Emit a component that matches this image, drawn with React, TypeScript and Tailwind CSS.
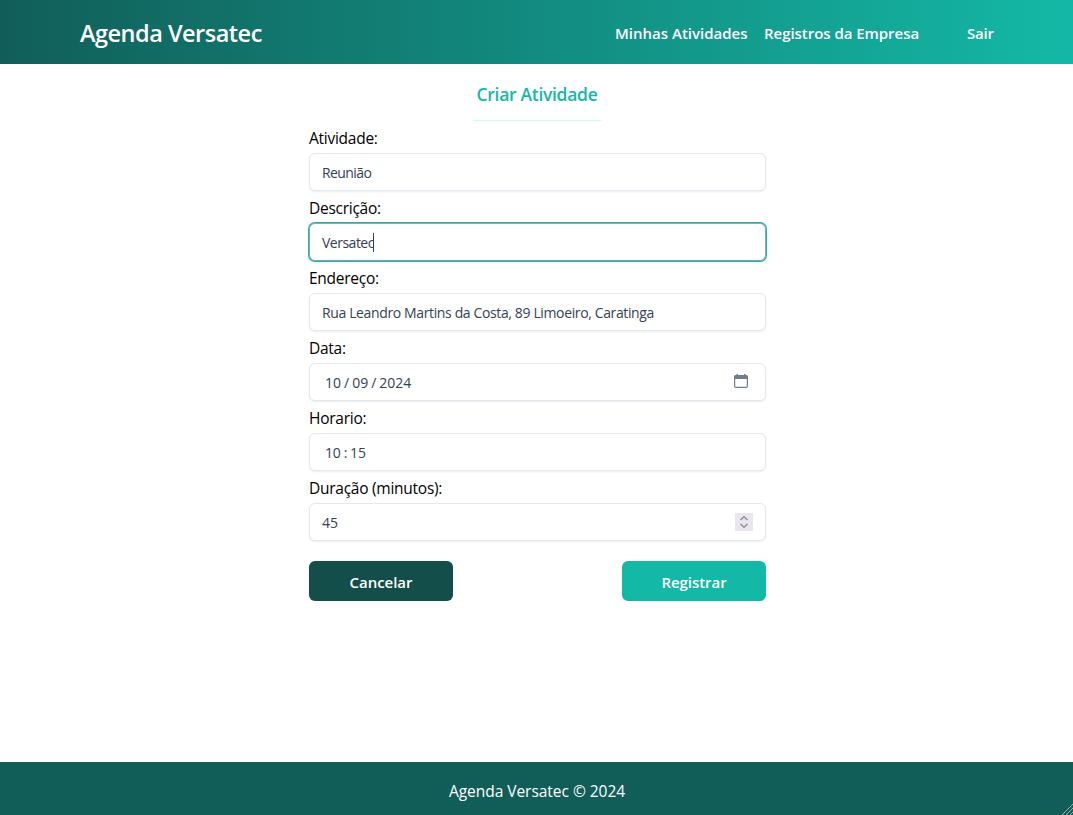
import type { ReactNode } from "react";

type FieldProps = {
  label: string;
  focused?: boolean;
  children: ReactNode;
};

function Field({ label, focused = false, children }: FieldProps) {
  return (
    <div className="h-[70px]">
      <div className="flex h-6 items-center pt-0.5 text-[15.5px] tracking-[-0.26px] text-black">
        <span>{label}</span>
      </div>
      <div
        className={
          "mt-[3px] flex h-[38px] items-center rounded-md border bg-white px-3 text-[14px] tracking-[-0.37px] text-[#334155] " +
          (focused
            ? "border-[#94a3b8] shadow-[0_0_0_1px_#14b8a6,0_1px_2px_0_rgba(15,23,42,0.08)]"
            : "border-[#e2e8f0] shadow-[0_1px_2px_0_rgba(15,23,42,0.08)]")
        }
      >
        {children}
      </div>
    </div>
  );
}

function CalendarIcon() {
  return (
    <svg width="14" height="14" viewBox="0 0 14 14" className="mr-[5px] -mt-0.5 ml-auto" fill="none">
      <path d="M2.5 0h1.5v2h-1.5zM10 0h1.5v2h-1.5z" fill="#717d8c" />
      <path d="M1.5 1h11A1.5 1.5 0 0 1 14 2.5V5H0V2.5A1.5 1.5 0 0 1 1.5 1Z" fill="#717d8c" />
      <rect x="0.6" y="2.5" width="12.8" height="10.9" rx="1.2" stroke="#717d8c" strokeWidth="1.2" />
    </svg>
  );
}

function Spinner() {
  return (
    <svg width="18" height="18" viewBox="0 0 18 18" className="ml-auto" fill="none">
      <rect width="18" height="18" fill="#e9e7ed" />
      <path d="M5.5 7 9 3.7 12.5 7M5.5 11 9 14.3 12.5 11" stroke="#908f9b" strokeWidth="1.5" />
    </svg>
  );
}

export default function App() {
  return (
    <div className="flex h-[815px] w-full flex-col overflow-hidden bg-white font-['Open_Sans','Noto_Sans',sans-serif]">
      <header className="flex h-16 shrink-0 items-center justify-between bg-[linear-gradient(to_right,#115e59,#14b8a6)] px-20 pt-0.5 text-white">
        <h1 className="whitespace-nowrap pt-0.5 text-[23.5px] font-semibold tracking-[-0.5px]">Agenda Versatec</h1>
        <nav className="flex whitespace-nowrap text-[15px] font-semibold">
          <a className="w-[149px]">Minhas Atividades</a>
          <a className="w-[203px] tracking-[-0.04px]">Registros da Empresa</a>
          <a className="w-[26px] tracking-[-0.2px]">Sair</a>
        </nav>
      </header>

      <main className="flex flex-1 flex-col items-center">
        <div className="flex h-[57px] w-32 justify-center border-b border-[#ccfbf1] pt-4 pl-px">
          <h2 className="whitespace-nowrap text-[17.5px] leading-7 font-semibold tracking-[-0.3px] text-[#14b8a6]">Criar Atividade</h2>
        </div>
        <form className="ml-[2px] w-[457px] pt-[5px]">
          <Field label="Atividade:">
            <span className="tracking-[-0.6px]">Reunião</span>
          </Field>
          <Field label="Descrição:" focused>
            <span className="w-[52px] tracking-[-0.5px]">Versatec</span>
            <span className="-ml-px h-[19px] w-px bg-[#334155]" />
          </Field>
          <Field label="Endereço:">
            <span>Rua Leandro Martins da Costa, 89 Limoeiro, Caratinga</span>
          </Field>
          <Field label="Data:">
            <div className="ml-[3px] flex tracking-[0px]">
              <span>10</span>
              <span className="mx-[3px]">/</span>
              <span>09</span>
              <span className="mx-[3px]">/</span>
              <span>2024</span>
            </div>
            <CalendarIcon />
          </Field>
          <Field label="Horario:">
            <div className="ml-[3px] flex tracking-[-0.2px]">
              <span>10</span>
              <span className="mx-[3px]">:</span>
              <span>15</span>
            </div>
          </Field>
          <Field label="Duração (minutos):">
            <span className="tracking-[0px]">45</span>
            <Spinner />
          </Field>
          <div className="mt-[15px] flex justify-between text-[15px] font-semibold tracking-[-0.05px] text-white">
            <button type="button" className="h-10 w-36 rounded-md bg-[#134e4a] pt-0.5">Cancelar</button>
            <button type="button" className="h-10 w-36 rounded-md bg-[#14b8a6] pt-0.5">Registrar</button>
          </div>
        </form>
      </main>

      <footer className="relative flex h-[53px] shrink-0 items-center justify-center bg-[#115e59] pt-1.5 pl-px text-[15.5px] tracking-[-0.03px] text-white">
        <span>Agenda Versatec © 2024</span>
        <svg width="12" height="12" viewBox="0 0 12 12" className="absolute right-0 bottom-0" shapeRendering="crispEdges">
          <path d="M1 12 12 1M5 12 12 5M9 12 12 9" stroke="#9ca8a5" strokeWidth="1.4" />
        </svg>
      </footer>
    </div>
  );
}
